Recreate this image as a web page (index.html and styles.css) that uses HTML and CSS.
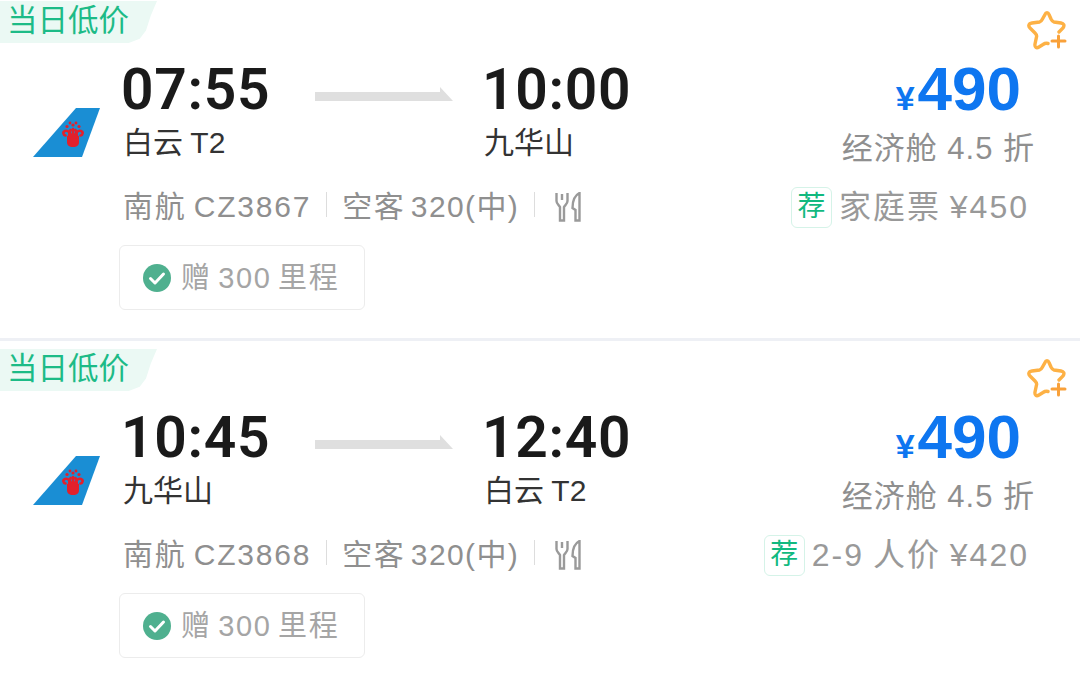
FILE: index.html
```html
<!DOCTYPE html>
<html lang="zh-CN">
<head>
    <meta charset="UTF-8">
    <meta name="viewport" content="width=device-width, initial-scale=1.0">
    <title>航班列表</title>
    <link rel="stylesheet" href="styles.css">
</head>
<body>
    <svg class="defs" width="0" height="0">
        <symbol id="tail" viewBox="0 0 67 49">
            <polygon points="0,49 43,0 67,0 49,49" fill="#1a8ed4"/>
            <path d="M34 28h12v6c0 3.500-2 5-6 5s-6-1.500-6-5z" fill="#e2202c"/>
            <path d="M38 29c0-4-3-7-6-6-2.500 1-2 4 .5 4.500M42 29c0-4 3-7 6-6 2.500 1 2 4-.5 4.500M36 29c0-3 .5-5 1.500-7M44 29c0-3-.5-5-1.500-7M40 29v-8" fill="none" stroke="#e2202c" stroke-width="2.600" stroke-linecap="round"/>
            <circle cx="34" cy="18.500" r="1.600" fill="#e2202c"/>
            <circle cx="40" cy="17" r="1.600" fill="#e2202c"/>
            <circle cx="46" cy="18.500" r="1.600" fill="#e2202c"/>
            <circle cx="37" cy="15" r="1.400" fill="#e2202c"/>
            <circle cx="43" cy="15" r="1.400" fill="#e2202c"/>
        </symbol>
        <symbol id="star" viewBox="0 0 40 40">
            <path d="M32 22L36 18C38 15 36.500 13.500 34 13L27 12C25.500 11.700 25 11 24 9L22 4.500C21 2 19 2 18 4.500L15.500 9C14.500 11 14 11.700 12.500 12L5 13C1.500 13.500 1 16 3 18L8 23C9.500 24.500 10 25.500 9.500 27L8 34C7.500 37.500 9.500 38.500 12 37L16 34.500C17.500 33.500 19 33 21 33.500" fill="none" stroke="#fdb145" stroke-width="3.400" stroke-linecap="round"/>
            <path d="M25 31h13M31.500 26v11" fill="none" stroke="#f9a13a" stroke-width="3" stroke-linecap="round"/>
        </symbol>
        <symbol id="meal" viewBox="0 0 26 30">
            <path d="M1.500 1v8c0 3 2.500 4 3.500 6v13.500h4V15c1-2 3.500-3 3.500-6V1M7 2v6" fill="none" stroke="#9a9a9a" stroke-width="2.400"/>
            <path d="M24.500 1c-4 2-7 7-7 15l3 2v10.500h4z" fill="none" stroke="#9a9a9a" stroke-width="2.400"/>
        </symbol>
        <symbol id="check" viewBox="0 0 28 28">
            <circle cx="14" cy="14" r="14" fill="#4fb08f"/>
            <path d="M7.500 14.500l4.500 4.500 8.500-9" fill="none" stroke="#fff" stroke-width="3" stroke-linecap="round" stroke-linejoin="round"/>
        </symbol>
    </svg>

    <div class="card">
        <div class="tag">当日低价</div>
        <svg class="star"><use href="#star"/></svg>
        <div class="card-body">
            <svg class="logo"><use href="#tail"/></svg>
            <div class="info">
                <div class="route">
                    <div class="time">07:55</div>
                    <svg class="arrow" viewBox="0 0 138 14"><polygon points="0,5 125,5 125,0 138,14 0,14" fill="#dfdfdf"/></svg>
                    <div class="time">10:00</div>
                    <div class="station">白云 T2</div>
                    <div></div>
                    <div class="station">九华山</div>
                </div>
                <div class="meta">
                    <span class="flight">南航 CZ3867</span>
                    <i class="line"></i>
                    <span class="plane">空客 320(中)</span>
                    <i class="line"></i>
                    <svg class="meal"><use href="#meal"/></svg>
                </div>
                <div class="chip">
                    <svg class="check"><use href="#check"/></svg>
                    <span>赠 300 里程</span>
                </div>
            </div>
            <div class="fare">
                <div class="price"><span class="yen">¥</span>490</div>
                <div class="cabin">经济舱 4.5 折</div>
                <div class="offer">
                    <span class="rec">荐</span>
                    <span class="offer-text">家庭票 ¥450</span>
                </div>
            </div>
        </div>
    </div>

    <div class="card">
        <div class="tag">当日低价</div>
        <svg class="star"><use href="#star"/></svg>
        <div class="card-body">
            <svg class="logo"><use href="#tail"/></svg>
            <div class="info">
                <div class="route">
                    <div class="time">10:45</div>
                    <svg class="arrow" viewBox="0 0 138 14"><polygon points="0,5 125,5 125,0 138,14 0,14" fill="#dfdfdf"/></svg>
                    <div class="time">12:40</div>
                    <div class="station">九华山</div>
                    <div></div>
                    <div class="station">白云 T2</div>
                </div>
                <div class="meta">
                    <span class="flight">南航 CZ3868</span>
                    <i class="line"></i>
                    <span class="plane">空客 320(中)</span>
                    <i class="line"></i>
                    <svg class="meal"><use href="#meal"/></svg>
                </div>
                <div class="chip">
                    <svg class="check"><use href="#check"/></svg>
                    <span>赠 300 里程</span>
                </div>
            </div>
            <div class="fare">
                <div class="price"><span class="yen">¥</span>490</div>
                <div class="cabin">经济舱 4.5 折</div>
                <div class="offer">
                    <span class="rec">荐</span>
                    <span class="offer-text">2-9 人价 ¥420</span>
                </div>
            </div>
        </div>
    </div>
</body>
</html>
```

FILE: styles.css
```css
body {
    font-family: "Liberation Sans", "Noto Sans CJK SC", sans-serif;
    background-color: #fff;
    margin: 0;
    padding: 0;
    overflow: hidden;
}
.defs {
    display: block;
    height: 0;
}
.card {
    position: relative;
    height: 337px;
    padding-top: 1px;
    margin-bottom: 7px;
    border-bottom: 3px solid #eef0f5;
}
.card:last-child {
    border-bottom: none;
    margin-bottom: 0;
}
.tag {
    width: 157px;
    height: 42px;
    padding-left: 7px;
    box-sizing: border-box;
    background-color: #ebf9f4;
    color: #1dbb87;
    font-size: 30.5px;
    line-height: 38px;
    clip-path: polygon(0 0, 100% 0, 96% 35%, 93% 70%, 89% 90%, 82% 100%, 0 100%);
}
.star {
    position: absolute;
    top: 10px;
    left: 1027px;
    width: 40px;
    height: 40px;
}
.card-body {
    display: flex;
}
.logo {
    width: 67px;
    height: 49px;
    margin: 65px 23px 0 33px;
    flex-shrink: 0;
}
.info {
    flex: 1;
}
.route {
    display: grid;
    grid-template-columns: 192px 138px 1fr;
    grid-template-rows: 68px 40px;
    margin-top: 14px;
}
.route .time:nth-child(3) {
    margin-left: 29px;
}
.route .station:nth-child(6) {
    margin-left: 31px;
}
.time {
    margin: 1px 0 0 -2px;
    font-family: Roboto, "Liberation Sans", sans-serif;
    font-size: 57px;
    font-weight: 600;
    line-height: 64px;
    color: #1a1a1a;
    letter-spacing: .7px;
}
.arrow {
    width: 138px;
    height: 14px;
    margin-top: 30px;
}
.station {
    margin-top: -2px;
    font-size: 30px;
    line-height: 40px;
    color: #333;
    word-spacing: -1px;
}
.meta {
    display: flex;
    align-items: center;
    gap: 15px;
    height: 40px;
    margin-top: 19px;
    font-size: 30px;
    color: #8f8f8f;
}
.flight {
    letter-spacing: 1.800px;
    word-spacing: -3px;
}
.plane {
    letter-spacing: 1.400px;
    word-spacing: -4px;
}
.line {
    width: 1px;
    height: 25px;
    background-color: #ddd;
}
.meal {
    width: 26px;
    height: 30px;
    margin: 6px 0 0 5px;
}
.chip {
    display: inline-flex;
    align-items: center;
    gap: 10px;
    width: 246px;
    height: 65px;
    box-sizing: border-box;
    margin: 21px 0 0 -4px;
    padding-left: 23px;
    border: 1px solid #ececec;
    border-radius: 6px;
    font-size: 29px;
    color: #a5a5a5;
    letter-spacing: 1.600px;
    word-spacing: -3px;
}
.chip span {
    padding-bottom: 5px;
}
.check {
    width: 28px;
    height: 28px;
}
.fare {
    display: flex;
    flex-direction: column;
    align-items: flex-end;
    padding-right: 45px;
}
.price {
    margin: 14px 14px 0 0;
    font-size: 62px;
    font-weight: bold;
    line-height: 64px;
    color: #0e76f0;
}
.yen {
    font-size: 34px;
    margin-right: 3px;
}
.cabin {
    margin-top: -3px;
    font-size: 31px;
    line-height: 44px;
    color: #8f8f8f;
    letter-spacing: 1px;
}
.offer {
    display: flex;
    align-items: center;
    gap: 7px;
    margin: 10px 6px 0 0;
    font-size: 32px;
    color: #999;
    letter-spacing: 2px;
    word-spacing: -2px;
}
.offer-text {
    padding-bottom: 6px;
}
.rec {
    width: 41px;
    height: 41px;
    box-sizing: border-box;
    border: 1px solid #d5f3e8;
    border-radius: 6px;
    text-align: center;
    font-size: 28px;
    line-height: 38px;
    color: #12b97f;
    letter-spacing: 0;
}
```
